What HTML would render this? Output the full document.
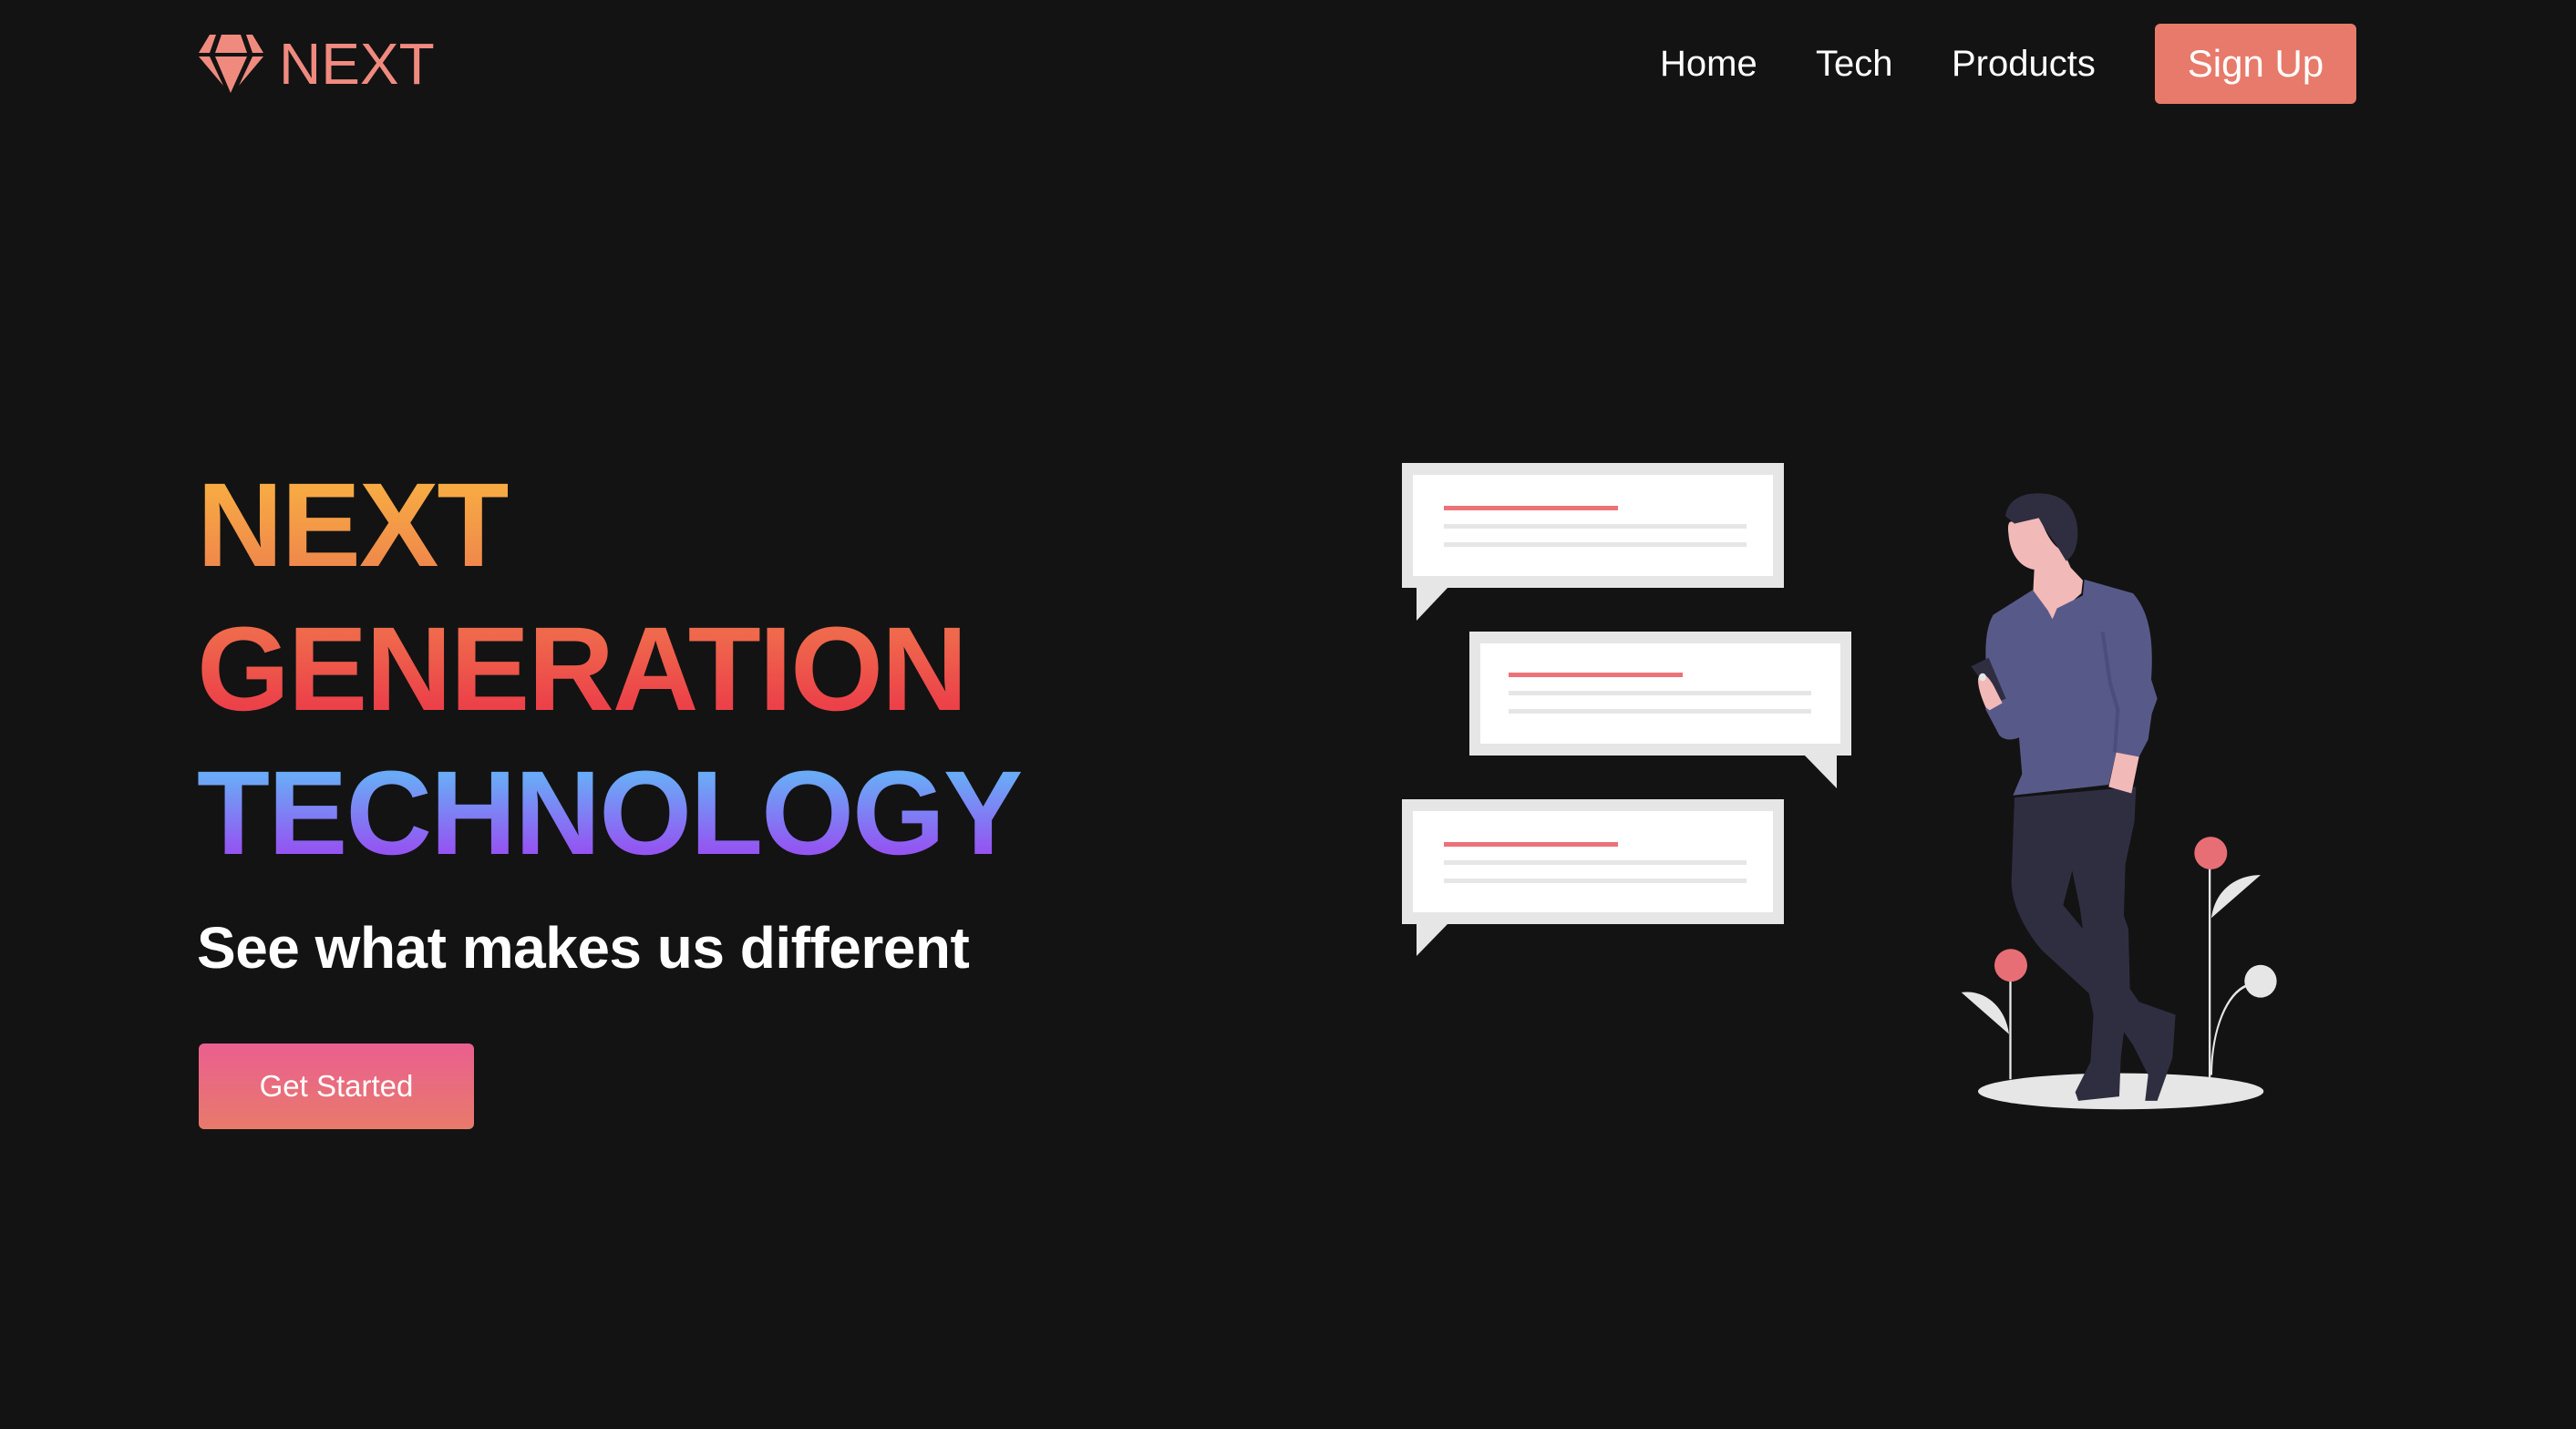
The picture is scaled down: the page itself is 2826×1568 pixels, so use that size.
<!DOCTYPE html>
<html><head><meta charset="utf-8"><style>
html,body{margin:0;padding:0;background:#131313;width:2826px;height:1568px;overflow:hidden;font-family:"Liberation Sans",sans-serif;}
.abs{position:absolute;}
.logo{left:306px;top:30px;font-size:64px;color:#f08a7f;line-height:80px;}
.nav{top:42px;font-size:40px;color:#fff;line-height:56px;}
.btn{left:2364px;top:26px;width:221px;height:88px;background:#e77a6a;border-radius:6px;color:#fff;font-size:42px;line-height:88px;text-align:center;}
.h{left:216px;font-weight:bold;font-size:131px;line-height:160px;white-space:nowrap;-webkit-background-clip:text;background-clip:text;color:transparent;letter-spacing:-2px;}
.sub{left:216px;top:1000px;font-weight:bold;font-size:64px;color:#fff;line-height:80px;white-space:nowrap;letter-spacing:-0.5px;}
.gs{left:218px;top:1145px;width:302px;height:94px;border-radius:6px;background:linear-gradient(#ea5f90,#e87a6b);color:#fff;font-size:33px;line-height:94px;text-align:center;}
</style></head><body>
<svg class="abs" style="left:218px;top:38px" width="71" height="64" viewBox="0 0 71 64">
<polygon points="0,20 12,0 19,0 12,20" fill="#f08a7f"/>
<polygon points="18,20 25,0 46,0 53,20" fill="#f08a7f"/>
<polygon points="59,20 52,0 59,0 71,20" fill="#f08a7f"/>
<polygon points="0,24 12,24 27,56" fill="#f08a7f"/>
<polygon points="18,24 53,24 35,64" fill="#f08a7f"/>
<polygon points="59,24 71,24 44,56" fill="#f08a7f"/>
</svg>
<div class="abs logo">NEXT</div>
<div class="abs nav" style="left:1821px">Home</div>
<div class="abs nav" style="left:1992px">Tech</div>
<div class="abs nav" style="left:2141px">Products</div>
<div class="abs btn">Sign Up</div>

<div class="abs h" style="top:496px;background-image:linear-gradient(#f7aa43 25%,#f08a4b 75%)">NEXT</div>
<div class="abs h" style="top:654px;background-image:linear-gradient(#ef6a4c 25%,#ec4149 75%)">GENERATION</div>
<div class="abs h" style="top:812px;background-image:linear-gradient(#6aaaf6 25%,#9356f2 75%)">TECHNOLOGY</div>
<div class="abs sub">See what makes us different</div>
<div class="abs gs">Get Started</div>

<svg class="abs" style="left:0;top:0" width="2826" height="1568">
<rect x="1538" y="508" width="419" height="137" fill="#e6e6e6"/>
<polygon points="1554,644 1589,644 1554,681" fill="#e6e6e6"/>
<rect x="1550" y="521" width="395" height="111" fill="#fff"/>
<rect x="1584" y="555" width="191" height="5" fill="#ec7278"/>
<rect x="1584" y="575" width="332" height="5" fill="#e6e6e6"/>
<rect x="1584" y="595" width="332" height="5" fill="#e6e6e6"/>
<rect x="1612" y="693" width="419" height="136" fill="#e6e6e6"/>
<polygon points="1979,828 2015,828 2015,865" fill="#e6e6e6"/>
<rect x="1624" y="706" width="395" height="110" fill="#fff"/>
<rect x="1655" y="738" width="191" height="5" fill="#ec7278"/>
<rect x="1655" y="758" width="332" height="5" fill="#e6e6e6"/>
<rect x="1655" y="778" width="332" height="5" fill="#e6e6e6"/>
<rect x="1538" y="877" width="419" height="137" fill="#e6e6e6"/>
<polygon points="1554,1013 1589,1013 1554,1049" fill="#e6e6e6"/>
<rect x="1550" y="890" width="395" height="111" fill="#fff"/>
<rect x="1584" y="924" width="191" height="5" fill="#ec7278"/>
<rect x="1584" y="944" width="332" height="5" fill="#e6e6e6"/>
<rect x="1584" y="964" width="332" height="5" fill="#e6e6e6"/>

<g transform="translate(2100,500) scale(0.3333,0.4719)">
<ellipse cx="680" cy="1478" rx="470" ry="42" fill="#e6e6e6"/>
<rect x="313" y="1215" width="7" height="235" fill="#e6e6e6"/>
<ellipse cx="318" cy="1185" rx="54" ry="38" fill="#e86e75"/>
<path d="M155,1248 C230,1240 300,1280 312,1345 Z" fill="#e6e6e6"/>
<rect x="969" y="955" width="7" height="490" fill="#e6e6e6"/>
<ellipse cx="976" cy="924" rx="54" ry="38" fill="#e86e75"/>
<path d="M978,1075 C990,1010 1060,975 1140,975 Z" fill="#e6e6e6"/>
<ellipse cx="1140" cy="1222" rx="53" ry="38" fill="#e6e6e6"/>
<path d="M978,1440 C980,1330 1030,1250 1095,1232" stroke="#e6e6e6" stroke-width="6" fill="none"/>
<path d="M330,795 L730,770 L725,850 L695,950 L690,1070 L705,1100 L710,1240 L740,1270 L820,1290 L860,1300 L850,1400 L800,1500 L760,1500 L770,1440 L720,1370 L690,1340 L680,1400 L675,1490 L540,1500 L530,1480 L580,1410 L590,1300 L575,1250 L420,1150 C360,1100 320,1040 320,990 Z" fill="#2f2e41"/>
<path d="M520,965 L490,1045 L555,1100 L545,1050 Z" fill="#131313"/>
<path d="M310,180 C305,150 320,150 330,158 L415,142 C430,180 460,215 490,220 L515,260 L555,290 L550,320 L455,380 L390,335 L395,265 C350,260 315,230 310,180 Z" fill="#f2b9b9"/>
<path d="M300,140 C310,100 360,85 420,88 C500,90 540,130 538,185 C535,220 520,235 500,245 L470,210 L430,170 L410,145 L330,158 Z" fill="#2f2e41"/>
<path d="M260,370 L390,312 L440,360 L455,380 L470,355 L555,325 L560,288 L720,320 C770,360 790,420 780,520 L800,565 L782,600 L770,660 L740,700 L665,690 L640,765 L325,790 L355,740 L345,655 C330,660 300,665 280,650 L235,590 L240,520 C230,450 235,400 260,370 Z" fill="#575a89"/>
<path d="M620,410 L645,530 L670,590 L660,690" stroke="#4b4d7a" stroke-width="12" fill="none"/>
<path d="M665,690 L740,700 L715,785 L640,770 Z" fill="#f2b9b9"/>
<polygon points="187,490 245,470 302,565 275,572" fill="#2f2e41"/>
<path d="M210,520 C215,500 240,505 265,540 L290,575 L248,592 L235,585 C220,560 210,540 210,520 Z" fill="#f2b9b9"/>
<ellipse cx="225" cy="515" rx="12" ry="9" fill="#e6e6e6"/>
</g>
</svg>
</body></html>
